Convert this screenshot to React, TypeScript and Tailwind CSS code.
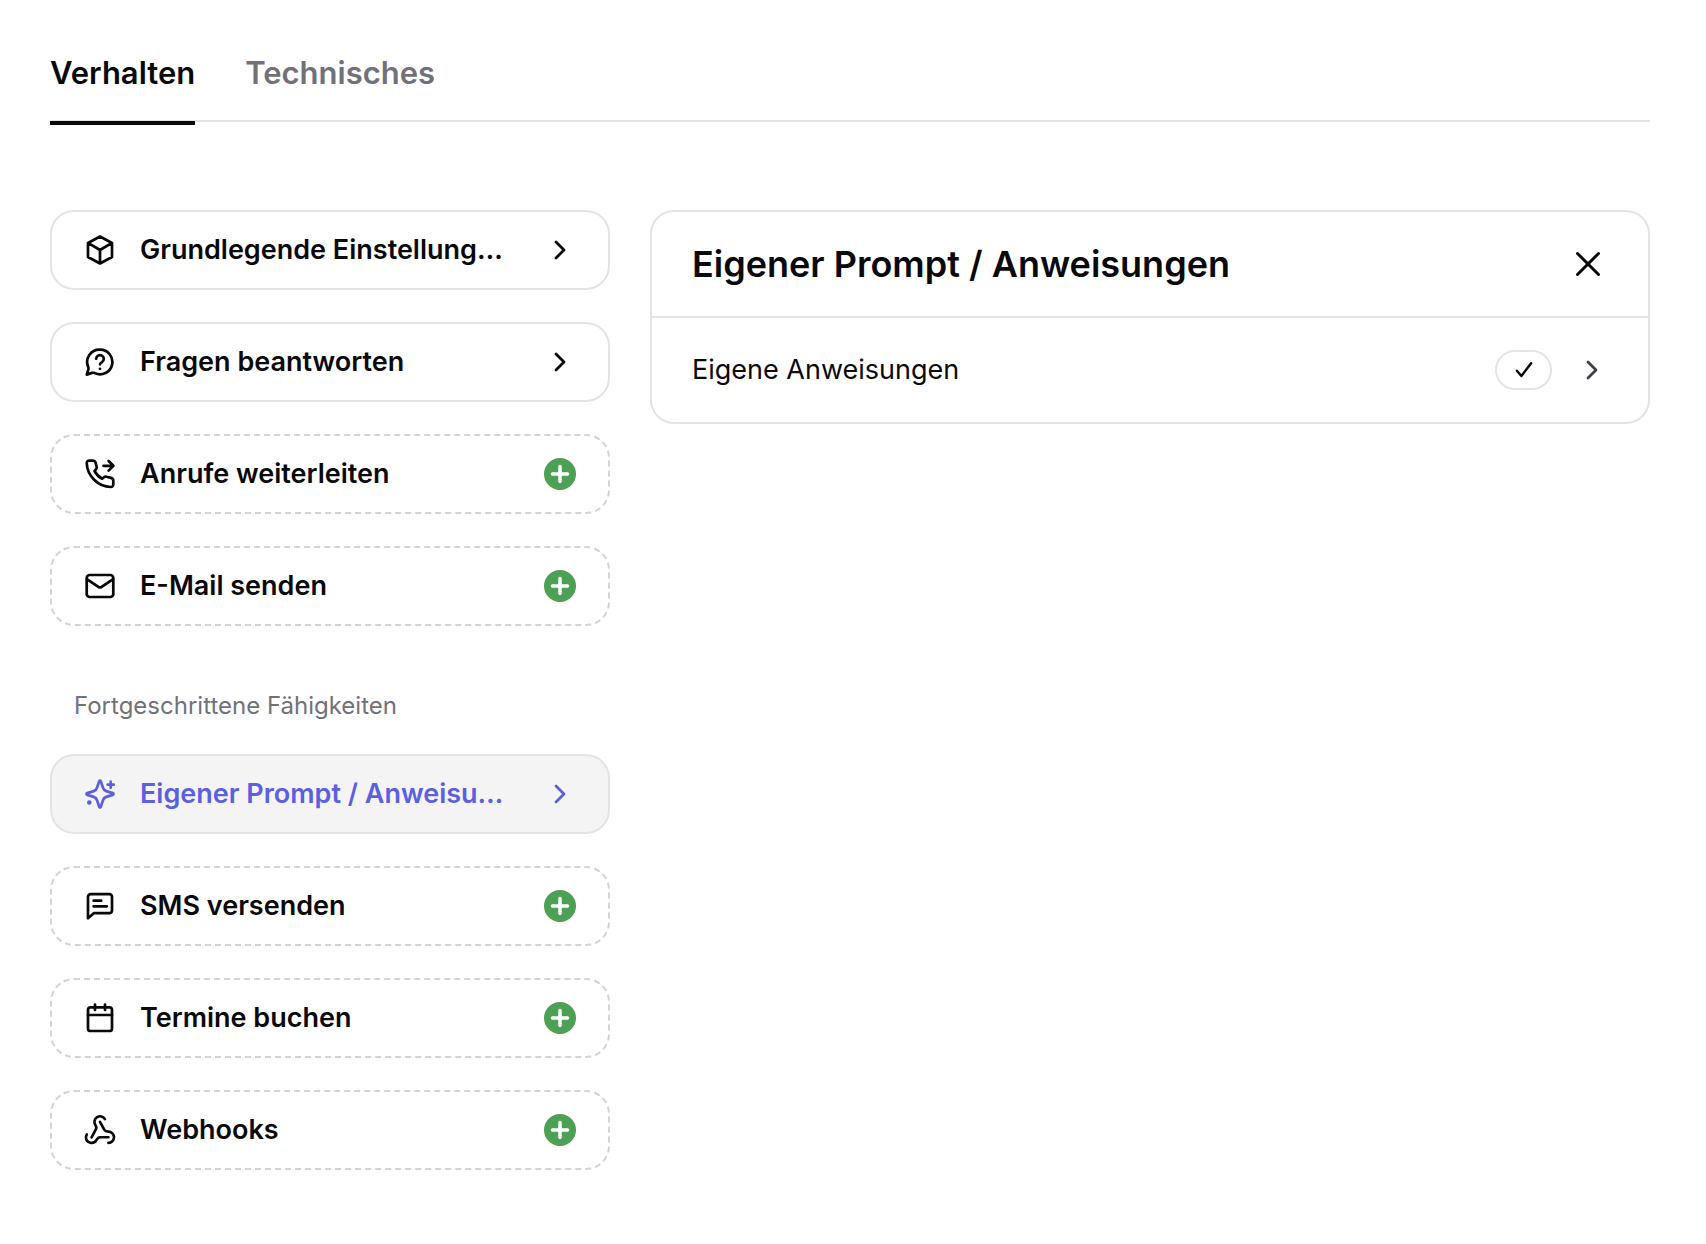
import { useState } from "react";
import type { ReactNode } from "react";
import clsx from "clsx";

type TIcon = {
    size?: string;
    className?: string;
    children: ReactNode;
}

const Icon = ({size = "size-8", className, children}: TIcon) => (
    <svg
        viewBox="0 0 32 32"
        fill="none"
        stroke="currentColor"
        strokeWidth={2.7}
        strokeLinecap="round"
        strokeLinejoin="round"
        aria-hidden="true"
        className={clsx("shrink-0", size, className)}
    >
        {children}
    </svg>
);

const icons: Record<string, ReactNode> = {
    box: <path d="M16 2.500 28 9v14L16 29.500 4 23V9L16 2.500ZM4.400 9.200 16 16l11.600-6.800M16 16v13" />,
    question: (
        <>
            <path d="M16 3.700a12.300 12.300 0 1 1-5.200 23.400c-1-.4-1.800-.5-2.900-.2L2.800 28.600l1.500-4.900c.3-1 .3-1.800-.1-2.800A12.300 12.300 0 0 1 16 3.700Z" />
            <path d="M12.200 12.800a3.800 3.800 0 1 1 5.800 3.300c-1.200.8-2 1.300-2 2.200" />
            <circle cx="16" cy="22.800" r="1.400" fill="currentColor" stroke="none" />
        </>
    ),
    forward: (
        <>
            <path d="M2.700 5.200c-.1-1.500 1-2.600 2.500-2.600h4c1 0 1.900.6 2.200 1.600l1.200 4.300c.3 1 .2 1.800-.5 2.600l-1.600 1.900c1.800 3.400 4.300 6 7.600 7.700l1.900-1.500c.8-.7 1.700-.8 2.600-.5l4.300 1.200c1.500.4 2.400 1.200 2.400 2.600v4c0 1.500-1.100 2.600-2.600 2.500C13.800 28.400 3.400 18 2.700 5.200Z" />
            <path d="M19.500 7.800h9.800M24.600 3l4.800 4.800-4.800 4.800" />
        </>
    ),
    mail: (
        <>
            <rect x="2.700" y="5" width="26.600" height="22" rx="3" />
            <path d="m3.200 9.400 11.200 7.500c1.100.8 2.100.8 3.200 0l11.200-7.500" />
        </>
    ),
    sparkles: (
        <>
            <path d="M15.100 3.300c.3-1.100 1.500-1.100 1.800 0l2 6.400a5 5 0 0 0 3.400 3.400l6.400 2c1.100.4 1.100 1.400 0 1.800l-6.400 2a5 5 0 0 0-3.400 3.400l-2 6.400c-.3 1.100-1.500 1.100-1.800 0l-2-6.400a5 5 0 0 0-3.400-3.400l-6.400-2c-1.100-.4-1.100-1.400 0-1.800l6.400-2a5 5 0 0 0 3.400-3.400Z" />
            <path d="M26.700 3.700v6M23.700 6.700h6" />
            <circle cx="5.300" cy="24.500" r="2.300" fill="currentColor" stroke="none" />
        </>
    ),
    message: (
        <>
            <path d="M4 6.800A2.600 2.600 0 0 1 6.600 4.200h18.800A2.600 2.600 0 0 1 28 6.800v13.800a2.600 2.600 0 0 1-2.600 2.600H9.800L4 28.200V6.800Z" />
            <path d="M9.600 10.700h7.600M9.600 16.300h13.200" />
        </>
    ),
    calendar: (
        <>
            <rect x="4" y="5.300" width="24" height="23.700" rx="2.600" />
            <path d="M4 13h24M11 2.500v5.500M21 2.500v5.500" />
        </>
    ),
    webhook: (
        <g transform="translate(-0.800 -0.500) scale(1.400)" strokeWidth={1.900}>
            <path d="M18 16.980h-5.990c-1.100 0-1.950.940-2.480 1.900A4 4 0 0 1 2 17c.010-.700.200-1.400.570-2" />
            <path d="m6 17 3.130-5.780c.530-.970.100-2.180-.500-3.100a4 4 0 1 1 6.890-4.060" />
            <path d="m12 6 3.130 5.730C15.660 12.700 16.900 13 18 13a4 4 0 0 1 0 8" />
        </g>
    ),
};

type TSkill = {
    id: string;
    label: string;
    icon: string;
    active: boolean;
}

const basicSkills: TSkill[] = [
    { id: "basic", label: "Grundlegende Einstellungen", icon: "box", active: true },
    { id: "questions", label: "Fragen beantworten", icon: "question", active: true },
    { id: "calls", label: "Anrufe weiterleiten", icon: "forward", active: false },
    { id: "mail", label: "E-Mail senden", icon: "mail", active: false },
];

const advancedSkills: TSkill[] = [
    { id: "prompt", label: "Eigener Prompt / Anweisungen", icon: "sparkles", active: true },
    { id: "sms", label: "SMS versenden", icon: "message", active: false },
    { id: "dates", label: "Termine buchen", icon: "calendar", active: false },
    { id: "webhooks", label: "Webhooks", icon: "webhook", active: false },
];

type TProp = {
    skill: TSkill;
    selected: boolean;
    onSelect: (id: string) => void;
}

const SkillButton = ({skill, selected, onSelect}: TProp) => (
    <button
        type="button"
        onClick={() => onSelect(skill.id)}
        className={clsx(
            "flex h-20 w-full items-center rounded-3xl border-2 px-8 text-left cursor-pointer",
            skill.active ? "border-[#e4e4e5]" : "border-dashed border-[#d4d4d8]",
            selected ? "bg-[#f4f4f5] text-[#5b5fe0]" : "bg-white"
        )}
    >
        <Icon>{icons[skill.icon]}</Icon>
        <span className="ml-6 min-w-0 flex-1 truncate text-[27px] leading-9 font-semibold">{skill.label}</span>
        {skill.active ? (
            <Icon className="ml-10">
                <path d="m12 8 8 8-8 8" strokeWidth={2.800} />
            </Icon>
        ) : (
            <Icon className="ml-10">
                <circle cx="16" cy="16" r="16" fill="#4ca154" stroke="none" />
                <path d="M16 8.500v15M8.500 16h15" stroke="#ffffff" strokeWidth={3.500} />
            </Icon>
        )}
    </button>
);

export default function App() {
    const [tab, setTab] = useState("Verhalten");
    const [selected, setSelected] = useState("prompt");

    return (
        <main className="min-h-screen bg-white pt-12 pr-14 pb-16 pl-[50px] font-['Inter',sans-serif] text-[#09090b]">
            <nav className="flex gap-[50px] border-b-2 border-[#e4e4e7]">
                {["Verhalten", "Technisches"].map((name) => (
                    <button
                        key={name}
                        type="button"
                        onClick={() => setTab(name)}
                        className={clsx(
                            "-mb-[5px] border-b-4 pb-7 pt-1 text-[31px] leading-[41px] font-semibold cursor-pointer",
                            tab === name ? "border-[#09090b]" : "border-transparent text-[#71717a]"
                        )}
                    >
                        {name}
                    </button>
                ))}
            </nav>

            <div className="mt-[88px] flex items-start gap-10">
                <aside className="w-[560px] shrink-0">
                    <div className="flex flex-col gap-8">
                        {basicSkills.map((skill) => (
                            <SkillButton key={skill.id} skill={skill} selected={selected === skill.id} onSelect={setSelected} />
                        ))}
                    </div>
                    <h2 className="mt-16 mb-8 px-6 text-2xl text-[#71717a]">Fortgeschrittene Fähigkeiten</h2>
                    <div className="flex flex-col gap-8">
                        {advancedSkills.map((skill) => (
                            <SkillButton key={skill.id} skill={skill} selected={selected === skill.id} onSelect={setSelected} />
                        ))}
                    </div>
                </aside>

                <section className="min-w-0 flex-1 rounded-3xl border-2 border-[#e4e4e5]">
                    <header className="flex items-center justify-between border-b-2 border-[#e4e4e5] py-8 pr-11 pl-10">
                        <h1 className="text-4xl font-semibold">Eigener Prompt / Anweisungen</h1>
                        <button type="button" aria-label="Schließen" className="cursor-pointer">
                            <Icon>
                                <path d="m5.500 5.500 21 21M26.500 5.500l-21 21" strokeWidth={3} />
                            </Icon>
                        </button>
                    </header>
                    <button type="button" className="flex h-[104px] w-full items-center px-10 text-left cursor-pointer">
                        <span className="flex-1 text-[27px] leading-9">Eigene Anweisungen</span>
                        <span className="flex h-10 w-[57px] items-center justify-center rounded-full border-2 border-[#e4e4e5]">
                            <Icon size="size-6">
                                <path d="m6.500 17 6 7L25.500 7" strokeWidth={3.200} />
                            </Icon>
                        </span>
                        <Icon className="ml-6 text-[#3f3f46]">
                            <path d="m12 8 8 8-8 8" strokeWidth={2.800} />
                        </Icon>
                    </button>
                </section>
            </div>
        </main>
    );
}
